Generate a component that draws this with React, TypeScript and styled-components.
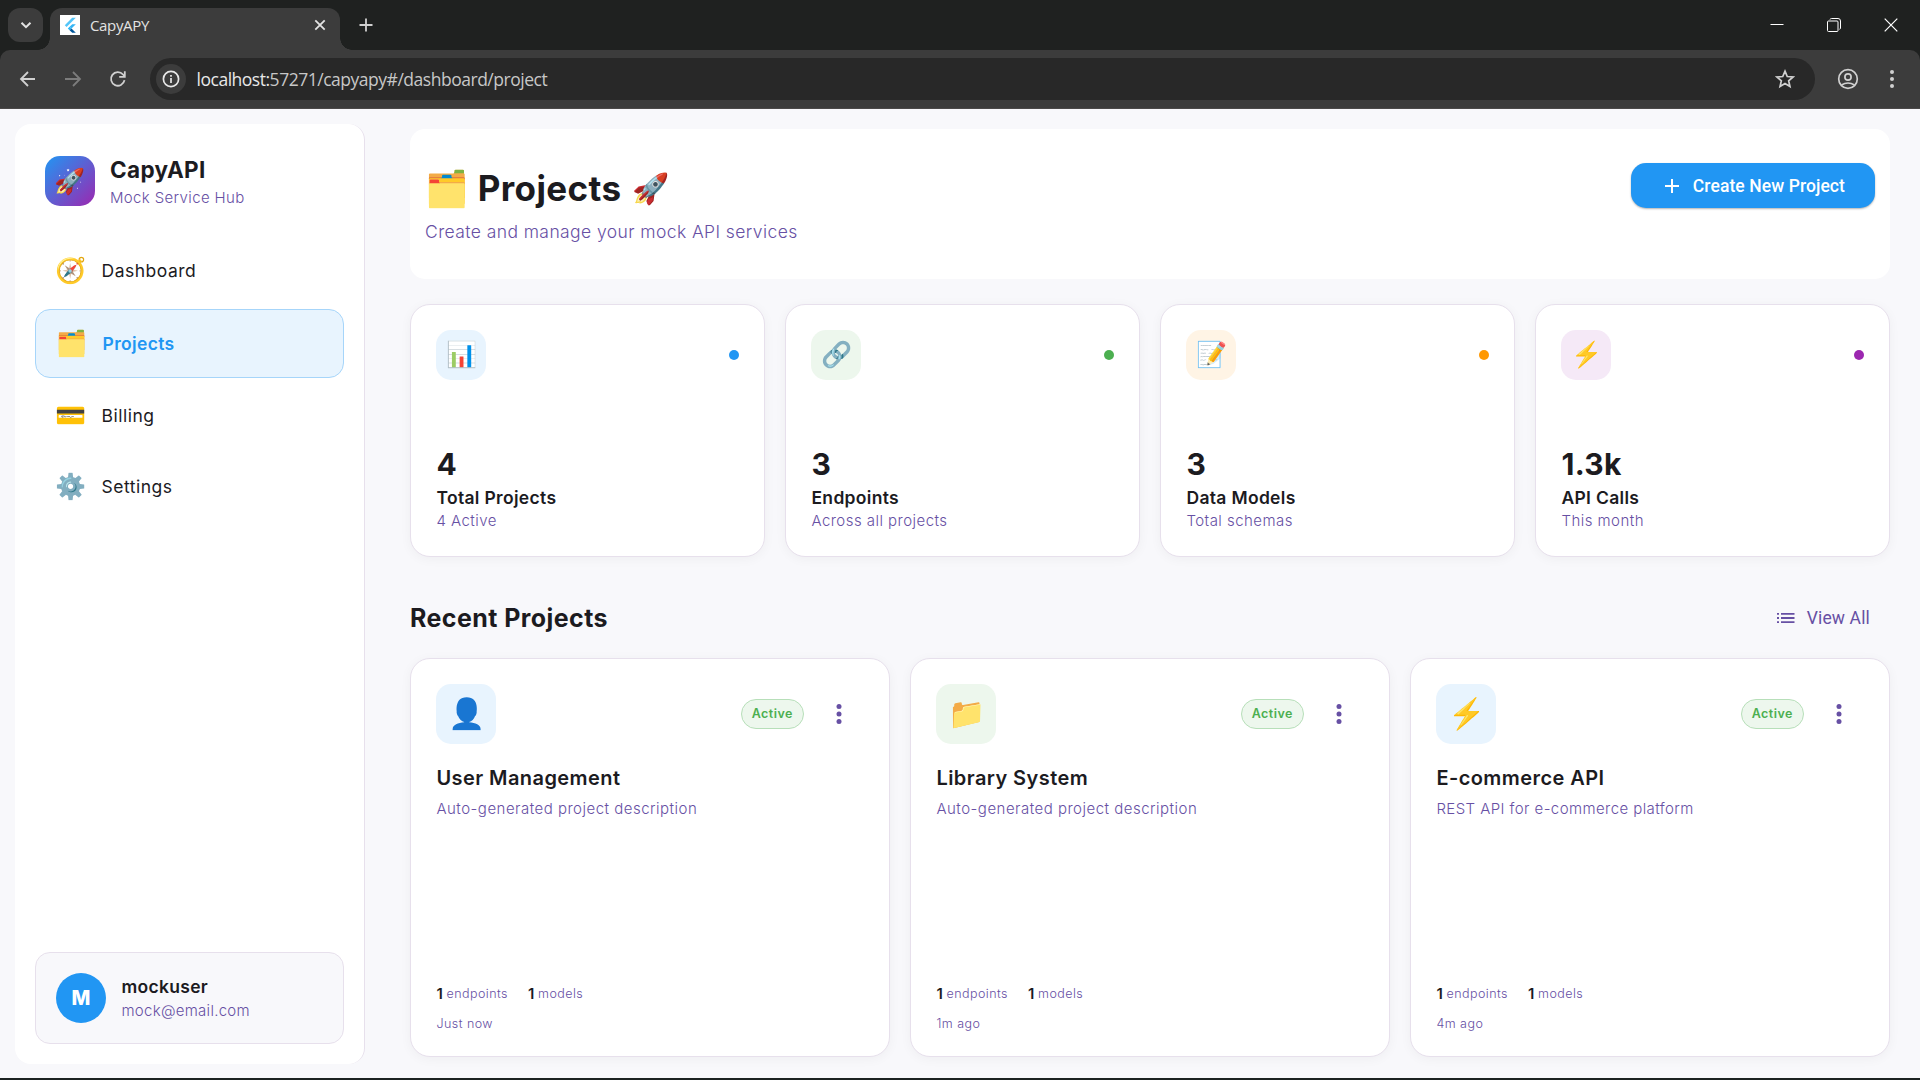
import React from 'react';
import styled, { createGlobalStyle, css } from 'styled-components';

const INTER = "Inter, 'Noto Color Emoji', sans-serif";
const ROBOTO = 'Roboto, sans-serif';
const INK = '#1c1b1f';
const PURPLE = '#6750a4';
const LINE = '#e7e0ec';

const GlobalStyle = createGlobalStyle`
  * { box-sizing: border-box; }
  body { margin: 0; background: #f8f8fb; overflow: hidden; }
  button { border: 0; padding: 0; background: none; font: inherit; }
`;

const Window = styled.div`
  width: 1920px;
  height: 1080px;
  display: flex;
  flex-direction: column;
  overflow: hidden;
  background: #f8f8fb;
  font-family: ${INTER};
  color: ${INK};
`;

/* ---------- browser chrome ---------- */

const TabStrip = styled.div`
  flex: none;
  height: 50px;
  display: flex;
  align-items: flex-start;
  background: #1f2120;
  padding: 8px 0 0 8px;
`;

const TabSearch = styled.button`
  width: 35px;
  height: 34px;
  border-radius: 12px;
  background: #3c3c3c;
  display: grid;
  place-items: center;
`;

const Tab = styled.div`
  position: relative;
  width: 290px;
  height: 42px;
  margin-left: 7px;
  padding: 0 13px 8px 10px;
  border-radius: 12px 12px 0 0;
  background: #3c3c3c;
  display: flex;
  align-items: center;

  &::before,
  &::after {
    content: '';
    position: absolute;
    bottom: 0;
    width: 12px;
    height: 12px;
  }
  &::before {
    left: -12px;
    background: radial-gradient(circle at 0 0, transparent 11.5px, #3c3c3c 12px);
  }
  &::after {
    right: -12px;
    background: radial-gradient(circle at 100% 0, transparent 11.5px, #3c3c3c 12px);
  }
`;

const Favicon = styled.svg`
  width: 20px;
  height: 20px;
  background: #fff;
`;

const TabTitle = styled.span`
  flex: 1;
  margin-left: 10px;
  font: 400 15px/20px 'Open Sans', sans-serif;
  letter-spacing: -0.35px;
  color: #e3e3e3;
`;

const NewTab = styled.div`
  width: 20px;
  height: 34px;
  margin-left: 16px;
  display: grid;
  place-items: center;
`;

const WindowControls = styled.div`
  margin-left: auto;
  display: flex;
  height: 33px;
  align-items: center;
  gap: 43px;
  padding-right: 22px;
`;

const ToolbarBack = styled.div`
  flex: none;
  height: 59px;
  background: #1f2120;
`;

const Toolbar = styled.div`
  height: 59px;
  padding: 0 20px 1px 18px;
  border-radius: 10px 10px 0 0;
  border-bottom: 1px solid #4b4949;
  background: #3c3c3c;
  display: flex;
  align-items: center;
`;

const NavButton = styled.button`
  width: 20px;
  height: 20px;
  margin-right: 25px;
  display: grid;
  place-items: center;
`;

const Omnibox = styled.div`
  flex: 1;
  height: 42px;
  margin: 0 22px 0 -3px;
  padding: 0 20px 0 6px;
  border-radius: 21px;
  background: #282828;
  display: flex;
  align-items: center;
`;

const SiteInfo = styled.div`
  width: 30px;
  height: 30px;
  border-radius: 50%;
  background: #3c3c3c;
  display: grid;
  place-items: center;
`;

const Url = styled.span`
  flex: 1;
  margin-left: 10.5px;
  font: 400 17.5px/24px 'Open Sans', sans-serif;
  letter-spacing: -0.48px;
  color: #c7c7c7;
`;

const Host = styled.span`
  color: #e8e8e8;
`;

const ToolbarEnd = styled.div`
  display: flex;
  align-items: center;
  gap: 25px;
`;

/* ---------- page ---------- */

const Page = styled.div`
  flex: none;
  height: 969px;
  display: flex;
  padding: 15px 30px 0 15px;
  overflow: hidden;
`;

const BottomEdge = styled.div`
  height: 2px;
  flex: none;
  background: #1c2221;
`;

const Sidebar = styled.aside`
  width: 350px;
  height: 940px;
  flex: none;
  padding: 0 20px 20px;
  border-radius: 16px;
  border-right: 1px solid ${LINE};
  background: #fff;
  display: flex;
  flex-direction: column;
`;

const Brand = styled.div`
  display: flex;
  gap: 15px;
  padding: 32px 10px 0;
  height: 113.5px;
`;

const BrandMark = styled.div`
  width: 50px;
  height: 50px;
  border-radius: 15px;
  background: linear-gradient(135deg, #2196f3, #9c27b0);
  display: grid;
  place-items: center;
  font-size: 25px;
  line-height: 28px;
`;

const BrandName = styled.div`
  margin: -2px 0 1.5px;
  font-size: 22.5px;
  font-weight: 700;
  line-height: 32px;
  letter-spacing: 0.35px;
`;

const Muted = styled.div<{ $size?: number; $spacing?: number }>`
  font-size: ${(p) => p.$size ?? 15}px;
  font-weight: 300;
  line-height: 20px;
  letter-spacing: ${(p) => p.$spacing ?? 0.46}px;
  color: ${PURPLE};
`;

const Nav = styled.nav`
  display: flex;
  flex-direction: column;
  gap: 5px;
`;

const NavItem = styled.a<{ $active?: boolean }>`
  height: 66px;
  padding: 0 20px;
  display: flex;
  align-items: center;
  gap: 15.5px;
  border-radius: 15px;
  font-size: 17.5px;
  line-height: 24px;
  letter-spacing: 0.5px;
  ${(p) =>
    p.$active &&
    css`
      height: 69px;
      padding-top: 1px;
      margin-bottom: 0.5px;
      border: 1px solid #a6d5fa;
      background: #e8f4fe;
      color: #2196f3;
      font-weight: 600;
      letter-spacing: 0.35px;
    `}
`;

const NavEmoji = styled.span`
  width: 31px;
  margin-bottom: 2px;
  font-size: 25px;
  letter-spacing: 0;
`;

const UserCard = styled.div`
  height: 92.5px;
  margin-top: auto;
  padding: 0 20px;
  border: 1px solid ${LINE};
  border-radius: 15px;
  background: #f8f8fb;
  display: flex;
  align-items: center;
  gap: 15.5px;
`;

const Avatar = styled.div`
  width: 50px;
  height: 50px;
  border-radius: 50%;
  background: #2196f3;
  color: #fff;
  display: grid;
  place-items: center;
  font-size: 20px;
  font-weight: 800;
`;

const UserName = styled.div`
  margin-bottom: 2px;
  font-size: 17.5px;
  font-weight: 600;
  line-height: 24px;
  letter-spacing: 0.3px;
`;

const Main = styled.main`
  flex: 1;
  margin-left: 45px;
  padding-top: 5px;
`;

const Header = styled.header`
  height: 150px;
  padding: 34px 15px 0;
  border-radius: 15px;
  background: #fff;
  display: flex;
  justify-content: space-between;
`;

const PageTitle = styled.h1`
  margin: 4px 0 0;
  display: flex;
  align-items: center;
  gap: 11px;
  font-size: 35px;
  font-weight: 700;
  line-height: 42px;
  letter-spacing: 0.4px;
`;

const TitleRocket = styled.span`
  font-size: 30px;
`;

const Subtitle = styled(Muted)`
  margin-top: 10px;
  line-height: 26px;
`;

const CreateButton = styled.button`
  width: 244px;
  height: 45px;
  padding-right: 30px;
  border-radius: 15px;
  background: #2196f3;
  box-shadow: 0 1px 2px rgba(0, 0, 0, 0.3);
  color: #fff;
  display: flex;
  align-items: center;
  justify-content: flex-end;
  gap: 12.5px;
  font: 500 17.5px/24px ${ROBOTO};
  letter-spacing: 0.08px;
`;

const cardSurface = css`
  border: 1px solid ${LINE};
  border-radius: 20px;
  background: #fff;
  box-shadow: 0 2px 12px rgba(0, 0, 0, 0.045);
  padding: 25px 25.45px;
  display: flex;
  flex-direction: column;
`;

const StatGrid = styled.section`
  margin-top: 25px;
  display: grid;
  grid-template-columns: repeat(4, 1fr);
  gap: 20px;
`;

const StatCard = styled.article`
  ${cardSurface}
  height: 253px;
`;

const CardTop = styled.div`
  display: flex;
  align-items: center;
`;

const IconTile = styled.div<{ $tint: string; $large?: boolean }>`
  width: ${(p) => (p.$large ? 60 : 50)}px;
  height: ${(p) => (p.$large ? 60 : 50)}px;
  margin-right: auto;
  padding-left: 1px;
  border-radius: 15px;
  background: ${(p) => p.$tint};
  display: grid;
  place-items: center;
  font-size: ${(p) => (p.$large ? 30 : 25)}px;
  line-height: 1.1;
`;

const Dot = styled.span<{ $color: string }>`
  width: 10px;
  height: 10px;
  border-radius: 50%;
  background: ${(p) => p.$color};
`;

const StatValue = styled.div`
  margin-top: auto;
  font-size: 30px;
  font-weight: 700;
  line-height: 38px;
  letter-spacing: 0.3px;
`;

const StatLabel = styled.div`
  margin-top: 3px;
  font-size: 17.5px;
  font-weight: 600;
  line-height: 24px;
  letter-spacing: 0.32px;
`;

const StatNote = styled(Muted)`
  margin: 1px 0 0;
`;

const SectionHead = styled.div`
  height: 60px;
  margin-top: 30.5px;
  display: flex;
  align-items: center;
  justify-content: space-between;
  padding-right: 20px;
`;

const SectionTitle = styled.h2`
  margin: 0;
  font-size: 25px;
  font-weight: 700;
  line-height: 32px;
  letter-spacing: 0.42px;
`;

const ViewAll = styled.a`
  display: flex;
  align-items: center;
  gap: 12px;
  font: 400 17.5px/24px ${ROBOTO};
  letter-spacing: 0.15px;
  color: ${PURPLE};
`;

const ProjectGrid = styled.section`
  margin-top: 10px;
  display: grid;
  grid-template-columns: repeat(3, 1fr);
  gap: 20px;
`;

const ProjectCard = styled.article`
  ${cardSurface}
  height: 399.5px;
`;

const Badge = styled.span`
  width: 63px;
  height: 30px;
  padding-left: 0.5px;
  border: 1px solid #b7dfb9;
  border-radius: 15px;
  background: #edf7ed;
  color: #4caf50;
  display: grid;
  place-items: center;
  font-size: 12.5px;
  font-weight: 600;
  letter-spacing: 0.5px;
`;

const MenuDots = styled.svg`
  width: 20px;
  height: 24px;
  margin: 0 15px 0 25px;
`;

const ProjectName = styled.h3`
  margin: 21px 0 0;
  font-size: 20px;
  font-weight: 600;
  line-height: 26px;
  letter-spacing: 0.42px;
`;

const ProjectText = styled(Muted)`
  margin-top: 8px;
`;

const Counts = styled.div`
  margin-top: auto;
  display: flex;
  gap: 20px;
`;

const Count = styled.div`
  display: flex;
  align-items: center;
  gap: 3.7px;
`;

const CountNumber = styled.span`
  font-size: 15px;
  font-weight: 600;
  line-height: 22px;
`;

const Ago = styled(Muted)`
  margin-top: 9px;
  margin-bottom: -3px;
`;

/* ---------- data ---------- */

const nav = [
  { icon: '🧭', label: 'Dashboard' },
  { icon: '🗂️', label: 'Projects', active: true },
  { icon: '💳', label: 'Billing' },
  { icon: '⚙️', label: 'Settings' },
];

const stats = [
  { icon: '📊', value: '4', label: 'Total Projects', note: '4 Active', color: '#2196f3', tint: '#e8f4fe' },
  { icon: '🔗', value: '3', label: 'Endpoints', note: 'Across all projects', color: '#4caf50', tint: '#edf7ed' },
  { icon: '📝', value: '3', label: 'Data Models', note: 'Total schemas', color: '#ff9800', tint: '#fff4e5' },
  { icon: '⚡', value: '1.3k', label: 'API Calls', note: 'This month', color: '#9c27b0', tint: '#f5e9f7' },
];

const projects = [
  { icon: '👤', name: 'User Management', text: 'Auto-generated project description', spacing: 0.49, ago: 'Just now', tint: '#e8f4fe' },
  { icon: '📁', name: 'Library System', text: 'Auto-generated project description', spacing: 0.49, ago: '1m ago', tint: '#edf7ed' },
  { icon: '⚡', name: 'E-commerce API', text: 'REST API for e-commerce platform', spacing: 0.42, ago: '4m ago', tint: '#e8f4fe' },
];

/* ---------- icons ---------- */

const stroke = (color: string, width = 2) => ({ fill: 'none', stroke: color, strokeWidth: width });

const FlutterIcon = () => (
  <Favicon viewBox="0 0 20 20">
    <path d="M12.2 2.8h3.6L6.6 12 4.8 10.2z" fill="#54c5f8" />
    <path d="M12.2 9.2h3.6l-4.3 4.3-1.9-1.8z" fill="#35b5f5" />
    <path d="M7.8 13.5l1.8-1.8 1.9 1.8-1.9 1.8z" fill="#29b6f6" />
    <path d="M9.6 15.3l1.9-1.8 4.3 4.2h-3.6z" fill="#01579b" />
  </Favicon>
);

const Chrome = () => (
  <>
    <TabStrip>
      <TabSearch>
        <svg width="12" height="12" viewBox="0 0 12 12"><path d="M1.500 3.700L6 8.200l4.500-4.500" {...stroke('#e3e3e3')} /></svg>
      </TabSearch>
      <Tab>
        <FlutterIcon />
        <TabTitle>CapyAPY</TabTitle>
        <svg width="14" height="14" viewBox="0 0 14 14"><path d="M2.3 2.3l9.4 9.4M11.7 2.3l-9.4 9.4" {...stroke('#e3e3e3', 1.8)} /></svg>
      </Tab>
      <NewTab>
        <svg width="14" height="14" viewBox="0 0 14 14"><path d="M7 .5v13M.5 7h13" {...stroke('#d0d0d0', 1.8)} /></svg>
      </NewTab>
      <WindowControls>
        <svg width="14" height="14" viewBox="0 0 14 14"><path d="M.5 6.500h13" {...stroke('#fff', 1)} /></svg>
        <svg width="14" height="14" viewBox="0 0 14 14">
          <rect x=".5" y="3" width="10.500" height="10.500" rx="1" {...stroke('#fff', 1)} />
          <path d="M3 1.5Q3.300.5 4.500.5H11a2.500 2.500 0 0 1 2.500 2.500v7q0 1-1 1.300" {...stroke('#fff', 1)} />
        </svg>
        <svg width="14" height="14" viewBox="0 0 14 14"><path d="M.7.7l12.600 12.600M13.300.7L.7 13.300" {...stroke('#fff', 1.2)} /></svg>
      </WindowControls>
    </TabStrip>
    <ToolbarBack>
      <Toolbar>
        <NavButton>
          <svg width="20" height="20" viewBox="0 0 20 20"><path d="M17 10H3.500M10 3L3 10l7 7" {...stroke('#d0d0d0', 1.8)} /></svg>
        </NavButton>
        <NavButton>
          <svg width="20" height="20" viewBox="0 0 20 20"><path d="M2 10h14.500M10 3l7 7-7 7" {...stroke('#7c7c7c', 1.8)} /></svg>
        </NavButton>
        <NavButton>
          <svg width="20" height="20" viewBox="0 0 20 20">
            <path d="M16.500 11.200A6.800 6.800 0 1 1 15 5.500L16.500 7.200" {...stroke('#d0d0d0', 1.8)} />
            <path d="M16.800 2.200v5.600h-5.600" {...stroke('#d0d0d0', 1.8)} />
          </svg>
        </NavButton>
        <Omnibox>
          <SiteInfo>
            <svg width="18" height="18" viewBox="0 0 18 18">
              <circle cx="9" cy="9" r="7.600" {...stroke('#e8e8e8', 1.7)} />
              <path d="M9 8v5M9 5v1.700" {...stroke('#e8e8e8', 1.7)} />
            </svg>
          </SiteInfo>
          <Url><Host>localhost:</Host>57271/capyapy#/dashboard/project</Url>
          <svg width="20" height="20" viewBox="0 0 20 20">
            <path d="M10 2.200l2.250 5.300 5.750.5-4.350 3.800 1.300 5.650L10 14.450l-4.950 3 1.300-5.650L2 8l5.750-.5z" {...stroke('#d0d0d0', 1.7)} />
          </svg>
        </Omnibox>
        <ToolbarEnd>
          <svg width="22" height="22" viewBox="0 0 22 22">
            <circle cx="11" cy="11" r="9.300" {...stroke('#d0d0d0', 1.7)} />
            <circle cx="11" cy="9" r="3.100" {...stroke('#d0d0d0', 1.7)} />
            <path d="M4.500 17q6.500-4 13 0" {...stroke('#d0d0d0', 1.7)} />
          </svg>
          <svg width="16" height="20" viewBox="0 0 16 20" fill="#d0d0d0">
            <circle cx="8" cy="3" r="2" /><circle cx="8" cy="10" r="2" /><circle cx="8" cy="17" r="2" />
          </svg>
        </ToolbarEnd>
      </Toolbar>
    </ToolbarBack>
  </>
);

const Side = () => (
  <Sidebar>
    <Brand>
      <BrandMark>🚀</BrandMark>
      <div>
        <BrandName>CapyAPI</BrandName>
        <Muted $spacing={0.36}>Mock Service Hub</Muted>
      </div>
    </Brand>
    <Nav>
      {nav.map((n) => (
        <NavItem key={n.label} $active={n.active}>
          <NavEmoji>{n.icon}</NavEmoji>
          {n.label}
        </NavItem>
      ))}
    </Nav>
    <UserCard>
      <Avatar>M</Avatar>
      <div>
        <UserName>mockuser</UserName>
        <Muted $spacing={0.28}>mock@email.com</Muted>
      </div>
    </UserCard>
  </Sidebar>
);

export default function App() {
  return (
    <Window>
      <GlobalStyle />
      <Chrome />
      <Page>
        <Side />
        <Main>
          <Header>
            <div>
              <PageTitle>
                <span>🗂️ Projects</span>
                <TitleRocket>🚀</TitleRocket>
              </PageTitle>
              <Subtitle $size={17.5} $spacing={0.41}>Create and manage your mock API services</Subtitle>
            </div>
            <CreateButton>
              <svg width="16" height="16" viewBox="0 0 16 16"><path d="M8 1v14M1 8h14" {...stroke('#fff', 2)} /></svg>
              Create New Project
            </CreateButton>
          </Header>
          <StatGrid>
            {stats.map((s) => (
              <StatCard key={s.label}>
                <CardTop>
                  <IconTile $tint={s.tint}>{s.icon}</IconTile>
                  <Dot $color={s.color} />
                </CardTop>
                <StatValue>{s.value}</StatValue>
                <StatLabel>{s.label}</StatLabel>
                <StatNote>{s.note}</StatNote>
              </StatCard>
            ))}
          </StatGrid>
          <SectionHead>
            <SectionTitle>Recent Projects</SectionTitle>
            <ViewAll>
              <svg width="18" height="12" viewBox="0 0 18 12" fill={PURPLE}>
                <path d="M0 1h2v1.800H0zM0 5.100h2v1.800H0zM0 9.200h2V11H0zM4 1h13.500v1.800H4zM4 5.100h13.500v1.800H4zM4 9.200h13.500V11H4z" />
              </svg>
              View All
            </ViewAll>
          </SectionHead>
          <ProjectGrid>
            {projects.map((p) => (
              <ProjectCard key={p.name}>
                <CardTop>
                  <IconTile $tint={p.tint} $large>{p.icon}</IconTile>
                  <Badge>Active</Badge>
                  <MenuDots viewBox="0 0 20 24" fill={PURPLE}>
                    <circle cx="10" cy="4.500" r="2.500" /><circle cx="10" cy="12" r="2.500" /><circle cx="10" cy="19.500" r="2.500" />
                  </MenuDots>
                </CardTop>
                <ProjectName>{p.name}</ProjectName>
                <ProjectText $spacing={p.spacing}>{p.text}</ProjectText>
                <Counts>
                  <Count><CountNumber>1</CountNumber><Muted $size={12.5}>endpoints</Muted></Count>
                  <Count><CountNumber>1</CountNumber><Muted $size={12.5}>models</Muted></Count>
                </Counts>
                <Ago $size={12.5}>{p.ago}</Ago>
              </ProjectCard>
            ))}
          </ProjectGrid>
        </Main>
      </Page>
      <BottomEdge />
    </Window>
  );
}
